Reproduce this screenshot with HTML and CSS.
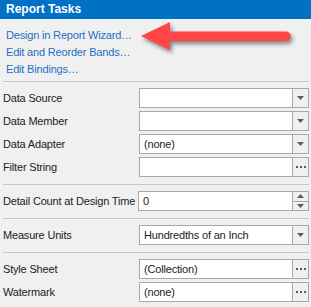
FILE: index.html
```html
<!DOCTYPE html>
<html lang="en">
<head>
    <meta charset="UTF-8">
    <title>Report Tasks</title>
    <link rel="stylesheet" href="styles.css">
</head>
<body>
    <div class="panel">
        <div class="panel-header">Report Tasks</div>

        <div class="links">
            <a class="link">Design in Report Wizard…</a>
            <a class="link">Edit and Reorder Bands…</a>
            <a class="link">Edit Bindings…</a>
        </div>

        <div class="group">
            <div class="row">
                <span class="label">Data Source</span>
                <div class="field">
                    <span class="value"></span>
                    <span class="btn"><svg width="7" height="4"><polygon points="0,0 7,0 3.5,4" /></svg></span>
                </div>
            </div>
            <div class="row">
                <span class="label">Data Member</span>
                <div class="field">
                    <span class="value"></span>
                    <span class="btn"><svg width="7" height="4"><polygon points="0,0 7,0 3.5,4" /></svg></span>
                </div>
            </div>
            <div class="row">
                <span class="label">Data Adapter</span>
                <div class="field">
                    <span class="value">(none)</span>
                    <span class="btn"><svg width="7" height="4"><polygon points="0,0 7,0 3.5,4" /></svg></span>
                </div>
            </div>
            <div class="row">
                <span class="label">Filter String</span>
                <div class="field">
                    <span class="value"></span>
                    <span class="btn"><svg width="10" height="2"><rect x="0" y="0" width="2" height="2" /><rect x="4" y="0" width="2" height="2" /><rect x="8" y="0" width="2" height="2" /></svg></span>
                </div>
            </div>
        </div>

        <div class="group">
            <div class="row row-wide">
                <span class="label">Detail Count at Design Time</span>
                <div class="field">
                    <span class="value">0</span>
                    <span class="btn spin">
                        <span class="spin-half"><svg width="7" height="4"><polygon points="3.5,0 7,4 0,4" /></svg></span>
                        <span class="spin-half"><svg width="7" height="4"><polygon points="0,0 7,0 3.5,4" /></svg></span>
                    </span>
                </div>
            </div>
        </div>

        <div class="group">
            <div class="row">
                <span class="label">Measure Units</span>
                <div class="field">
                    <span class="value">Hundredths of an Inch</span>
                    <span class="btn"><svg width="7" height="4"><polygon points="0,0 7,0 3.5,4" /></svg></span>
                </div>
            </div>
        </div>

        <div class="group">
            <div class="row">
                <span class="label">Style Sheet</span>
                <div class="field">
                    <span class="value">(Collection)</span>
                    <span class="btn"><svg width="10" height="2"><rect x="0" y="0" width="2" height="2" /><rect x="4" y="0" width="2" height="2" /><rect x="8" y="0" width="2" height="2" /></svg></span>
                </div>
            </div>
            <div class="row">
                <span class="label">Watermark</span>
                <div class="field">
                    <span class="value">(none)</span>
                    <span class="btn"><svg width="10" height="2"><rect x="0" y="0" width="2" height="2" /><rect x="4" y="0" width="2" height="2" /><rect x="8" y="0" width="2" height="2" /></svg></span>
                </div>
            </div>
        </div>
    </div>

    <!-- red callout arrow over the wizard link -->
    <svg class="callout" width="311" height="70">
        <path d="M141,36 L170,22 L170,31.5 L286,31.5 A4.75,4.75 0 0 1 286,41 L170,41 L170,50 Z" />
    </svg>
</body>
</html>
```

FILE: styles.css
```css
* {
    margin: 0;
    padding: 0;
    box-sizing: border-box;
    font-family: 'Liberation Sans', Arial, sans-serif;
}

body {
    background-color: #f0f0f0;
    color: #222;
    font-size: 11px;
    letter-spacing: -0.18px;
    width: 311px;
    height: 307px;
    position: relative;
    overflow: hidden;
}

.panel-header {
    height: 19px;
    line-height: 19px;
    padding-left: 6px;
    background-color: #0072c6;
    color: #ffffff;
    font-size: 12px;
    font-weight: bold;
    letter-spacing: 0;
}

.links {
    padding: 8px 6px 3px;
}

.link {
    display: block;
    line-height: 17px;
    color: #1f6fc5;
}

.group {
    margin: 0 2px 0 3px;
    padding: 6px 0 7px;
    border-top: 1px solid #c6c6c6;
    display: flex;
    flex-direction: column;
    gap: 3px;
}

.row {
    display: grid;
    grid-template-columns: 136px 1fr;
    align-items: center;
    height: 20px;
}

.row-wide {
    grid-template-columns: 135px 1fr;
}

.label {
    white-space: nowrap;
}

.field {
    display: flex;
    height: 20px;
    background-color: #ffffff;
    border: 1px solid #a8a8a8;
}

.value {
    flex: 1;
    padding-left: 4px;
    line-height: 18px;
    white-space: nowrap;
}

.btn {
    width: 16px;
    border-left: 1px solid #a8a8a8;
    background-color: #f0f0f0;
    display: flex;
    align-items: center;
    justify-content: center;
}

.btn svg {
    fill: #5c5c5c;
    display: block;
}

.spin {
    flex-direction: column;
}

.spin-half {
    flex: 1;
    width: 100%;
    display: flex;
    align-items: center;
    justify-content: center;
}

.spin-half + .spin-half {
    border-top: 1px solid #a8a8a8;
}

.callout {
    position: absolute;
    left: 0;
    top: 0;
    filter: drop-shadow(2px 3px 2px rgba(0, 0, 0, 0.45));
}

.callout path {
    fill: #ff4545;
}
```
